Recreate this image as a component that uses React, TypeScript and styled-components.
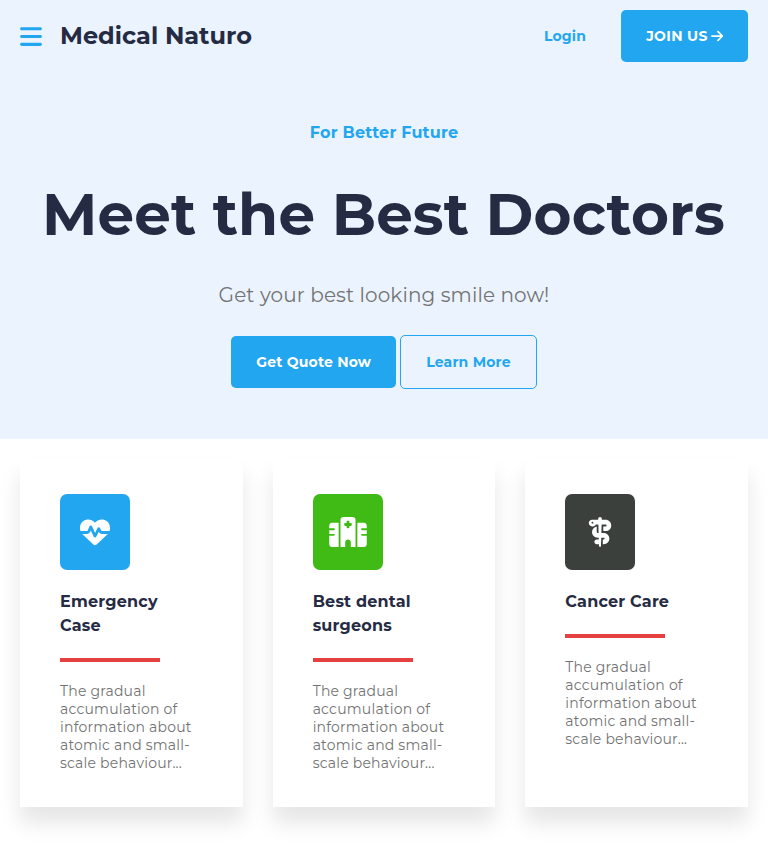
import React from 'react';
import styled, { createGlobalStyle } from 'styled-components';
import {
  FaArrowRight,
  FaBars,
  FaHeartPulse,
  FaHospital,
  FaStaffSnake,
} from 'react-icons/fa6';
import type { IconType } from 'react-icons';

const blue = '#23a6f0';
const navy = '#252b42';

const GlobalStyle = createGlobalStyle`
  *, *::before, *::after { box-sizing: border-box; }
  body {
    margin: 0;
    background: #fff;
    color: ${navy};
    font-family: Montserrat, "Open Sans", sans-serif;
    font-size: 14px;
    letter-spacing: 0.2px;
  }
  h1, h2, h3, p { margin: 0; }
`;

const Hero = styled.section`
  height: 439px;
  background: #ebf3ff;
`;

const Header = styled.header`
  display: flex;
  align-items: center;
  justify-content: space-between;
  height: 72px;
  padding: 0 20px;
`;

const Brand = styled.div`
  display: flex;
  align-items: center;
  gap: 18px;
`;

const BrandName = styled.span`
  padding-bottom: 2px;
  font-size: 24px;
  font-weight: 700;
  letter-spacing: 0;
`;

const MenuButton = styled.button`
  display: flex;
  padding: 0;
  border: 0;
  background: none;
  color: ${blue};
  font-size: 25px;

  svg { width: 22px; }
`;

const Actions = styled.nav`
  display: flex;
  align-items: center;
  gap: 35px;
`;

const LoginLink = styled.a`
  color: ${blue};
  font-weight: 700;
`;

const Button = styled.button<{ $outlined?: boolean }>`
  display: flex;
  align-items: center;
  gap: 4px;
  height: ${({ $outlined }) => ($outlined ? 54 : 52)}px;
  padding: 0 25px;
  border: ${({ $outlined }) => ($outlined ? `1px solid ${blue}` : '0')};
  border-radius: 5px;
  background: ${({ $outlined }) => ($outlined ? 'transparent' : blue)};
  color: ${({ $outlined }) => ($outlined ? blue : '#fff')};
  font: inherit;
  font-weight: 700;
  letter-spacing: inherit;
  white-space: nowrap;

  svg { width: 12.25px; }
`;

const JoinButton = styled(Button)`
  gap: 3px;
  letter-spacing: 0.34px;
`;

const HeroBody = styled.div`
  display: flex;
  flex-direction: column;
  align-items: center;
  padding-top: 49px;
  text-align: center;
`;

const Eyebrow = styled.p`
  color: ${blue};
  font-size: 16px;
  font-weight: 700;
  line-height: 24px;
`;

const Title = styled.h1`
  margin-top: 30px;
  padding-right: 1px;
  font-size: 58px;
  font-weight: 700;
  line-height: 80px;
  letter-spacing: 0.1px;
  white-space: nowrap;
`;

const Tagline = styled.p`
  margin-top: 25px;
  color: #737373;
  font-size: 20px;
  font-weight: 400;
  line-height: 30px;
  letter-spacing: 0.11px;
`;

const ButtonRow = styled.div`
  display: flex;
  align-items: center;
  gap: 4px;
  margin-top: 25px;
`;

const Cards = styled.section`
  display: grid;
  grid-template-columns: repeat(3, 1fr);
  gap: 30px;
  padding: 20px 20px 41px;
`;

const Card = styled.article`
  height: 348px;
  padding: 35px 40px;
  background: #fff;
  box-shadow: 0 16px 20px rgba(0, 0, 0, 0.1);
`;

const IconTile = styled.div<{ $color: string; $iconWidth: number }>`
  display: flex;
  align-items: center;
  justify-content: center;
  width: 70px;
  height: 76px;
  border-radius: 7px;
  background: ${({ $color }) => $color};
  color: #fff;
  font-size: 30px;

  svg { width: ${({ $iconWidth }) => $iconWidth}px; }
`;

const CardTitle = styled.h2`
  margin-top: 20px;
  font-size: 16px;
  font-weight: 700;
  line-height: 24px;
`;

const Rule = styled.div`
  width: 100px;
  height: 4px;
  margin: 20px 0;
  background: #e74040;
`;

const CardText = styled.p`
  color: #737373;
  font-weight: 400;
  line-height: 18px;
`;

const services: { title: string; color: string; icon: IconType; iconWidth: number }[] = [
  { title: 'Emergency Case', color: blue, icon: FaHeartPulse, iconWidth: 30 },
  { title: 'Best dental surgeons', color: '#40bb15', icon: FaHospital, iconWidth: 38 },
  { title: 'Cancer Care', color: '#3c403d', icon: FaStaffSnake, iconWidth: 30 },
];

export default function App() {
  return (
    <>
      <GlobalStyle />
      <Hero>
        <Header>
          <Brand>
            <MenuButton aria-label="Menu">
              <FaBars />
            </MenuButton>
            <BrandName>Medical Naturo</BrandName>
          </Brand>
          <Actions>
            <LoginLink>Login</LoginLink>
            <JoinButton>
              JOIN US
              <FaArrowRight />
            </JoinButton>
          </Actions>
        </Header>
        <HeroBody>
          <Eyebrow>For Better Future</Eyebrow>
          <Title>Meet the Best Doctors</Title>
          <Tagline>Get your best looking smile now!</Tagline>
          <ButtonRow>
            <Button>Get Quote Now</Button>
            <Button $outlined>Learn More</Button>
          </ButtonRow>
        </HeroBody>
      </Hero>
      <Cards>
        {services.map(({ title, color, icon: Icon, iconWidth }) => (
          <Card key={title}>
            <IconTile $color={color} $iconWidth={iconWidth}>
              <Icon />
            </IconTile>
            <CardTitle>{title}</CardTitle>
            <Rule />
            <CardText>
              The gradual accumulation of information about atomic and small-scale behaviour...
            </CardText>
          </Card>
        ))}
      </Cards>
    </>
  );
}
